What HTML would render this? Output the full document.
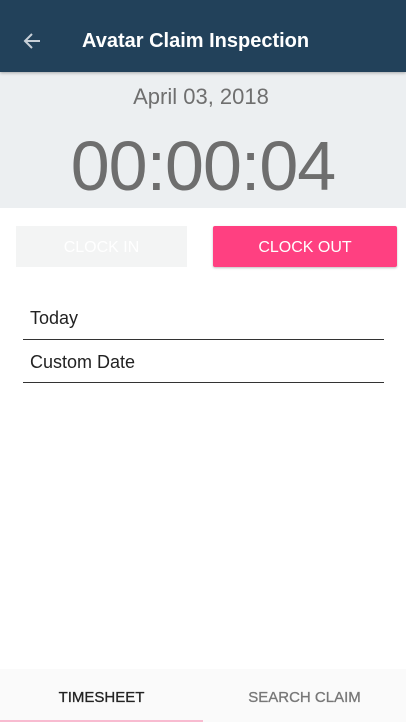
<html><head><style>
body{margin:0;width:406px;height:722px;position:relative;font-family:"Liberation Sans",sans-serif;background:#fff;overflow:hidden}
.a{position:absolute}
</style></head><body>
<div class="a" style="left:0;top:0;width:406px;height:72px;background:#22415a;box-shadow:0 1px 3px rgba(0,0,0,.3);z-index:2"></div>
<svg class="a" style="left:22px;top:31px;z-index:3" width="20" height="20" viewBox="0 0 20 20"><path d="M18 10H3M10 3L3 10l7 7" stroke="#c8d0d8" stroke-width="2" fill="none"/></svg>
<div class="a" style="left:82px;top:30px;color:#fff;font-size:20px;font-weight:bold;z-index:3">Avatar Claim Inspection</div>
<div class="a" style="left:0;top:72px;width:406px;height:136px;background:#eceff1"></div>
<div class="a" style="left:0;top:84px;width:402px;text-align:center;color:#6f6f6f;font-size:22px">April 03, 2018</div>
<div class="a" style="left:0;top:126px;width:406px;text-align:center;color:#6e6e6e;font-size:70px;letter-spacing:-1px">00:00:04</div>
<div class="a" style="left:16px;top:226px;width:171px;height:41px;background:#f3f4f4;color:#fff;font-size:16px;text-align:center;line-height:43px">CLOCK IN</div>
<div class="a" style="left:213px;top:226px;width:184px;height:41px;background:#ff4081;color:#fff;font-size:16px;text-align:center;line-height:43px;box-shadow:0 1px 2px rgba(0,0,0,.25);border-radius:2px">CLOCK OUT</div>
<div class="a" style="left:30px;top:308px;font-size:18px;color:#222">Today</div>
<div class="a" style="left:23px;top:339px;width:361px;height:1px;background:#333"></div>
<div class="a" style="left:30px;top:352px;font-size:18px;color:#222">Custom Date</div>
<div class="a" style="left:23px;top:382px;width:361px;height:1px;background:#333"></div>
<div class="a" style="left:0;top:669px;width:406px;height:53px;background:#fafafa"></div>
<div class="a" style="left:0;top:689px;width:203px;text-align:center;font-size:15px;color:#222;-webkit-text-stroke:0.3px #222">TIMESHEET</div>
<div class="a" style="left:203px;top:689px;width:203px;text-align:center;font-size:15px;color:#777;-webkit-text-stroke:0.3px #777">SEARCH CLAIM</div>
<div class="a" style="left:0;top:720px;width:203px;height:2px;background:#f8bbd0"></div>
</body></html>
